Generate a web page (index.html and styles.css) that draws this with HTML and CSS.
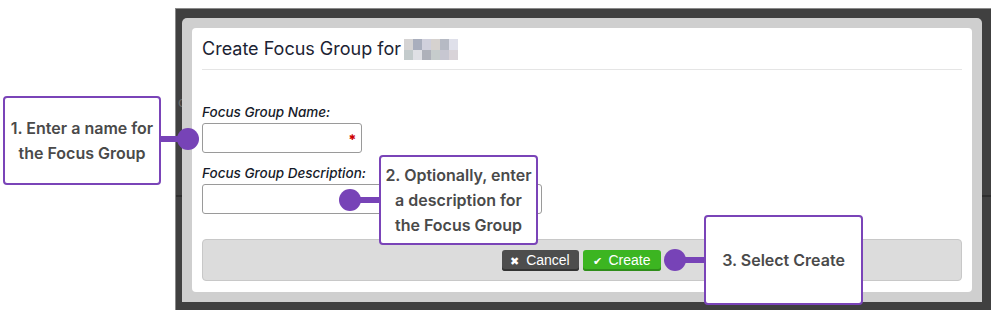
FILE: index.html
```html
<!DOCTYPE html>
<html lang="en">
<head>
    <meta charset="UTF-8">
    <title>Create Focus Group</title>
    <link rel="stylesheet" href="styles.css">
</head>
<body>
    <div class="stage">
        <div class="backdrop">
            <span class="bg-text">cu</span>
            <div class="frame">
                <div class="modal">
                    <div class="modal-header">
                        <h2>Create Focus Group for</h2>
                        <div class="blur">
                            <i style="background:#d5d3d3"></i><i style="background:#a9aebd"></i><i style="background:#d0d0dc"></i><i style="background:#d6d2cf"></i><i style="background:#b6bac4"></i><i style="background:#dfe0ea"></i>
                            <i style="background:#c3cbcc"></i><i style="background:#dfe0e5"></i><i style="background:#aeb1ba"></i><i style="background:#c6cccc"></i><i style="background:#c7c7d1"></i><i style="background:#d8d3d8"></i>
                        </div>
                    </div>
                    <form class="modal-body">
                        <label class="field-label">Focus Group Name:</label>
                        <div class="input name-input"><span class="req">&#10033;</span></div>
                        <label class="field-label">Focus Group Description:</label>
                        <div class="input desc-input"></div>
                        <div class="footer">
                            <button type="button" class="btn btn-cancel"><span class="ico">&#10006;</span> Cancel</button>
                            <button type="button" class="btn btn-create"><span class="ico">&#10004;</span> Create</button>
                        </div>
                    </form>
                </div>
            </div>
        </div>

        <!-- callouts -->
        <div class="callout c1">1. Enter a name for the Focus Group</div>
        <div class="connector k1"></div>
        <div class="callout c2">2. Optionally, enter a description for the Focus Group</div>
        <div class="connector k2"></div>
        <div class="callout c3">3. Select Create</div>
        <div class="connector k3"></div>
    </div>
</body>
</html>
```

FILE: styles.css
```css
body {
    margin: 0;
    background: #fff;
    font-family: Inter, "Noto Sans", sans-serif;
}
.stage {
    position: relative;
    width: 991px;
    height: 310px;
    overflow: hidden;
}
.backdrop {
    position: relative;
    margin: 8px 0 0 175px;
    height: 302px;
    box-sizing: border-box;
    padding: 9px 0 0 6px;
    background: #404040 linear-gradient(#404040 186px, #2e2e2e 186px, #2e2e2e 188px, #404040 188px);
    border-top: 1px solid #8a8a8a;
    border-left: 1px solid #8a8a8a;
}
.bg-text {
    position: absolute;
    left: 2px;
    top: 84px;
    font-size: 14px;
    color: #6a6a6a;
}
.frame {
    position: relative;
    width: 800px;
    height: 284px;
    box-sizing: border-box;
    padding: 10px;
    background: #cfcfcf;
    border-radius: 5px 5px 0 0;
}
.modal {
    background: #fff;
    border-radius: 4px;
    height: 264px;
    padding: 0 10px;
    box-sizing: border-box;
}
.modal-header {
    display: flex;
    align-items: center;
    gap: 3px;
    height: 41px;
    border-bottom: 1px solid #e5e5e5;
}
.modal-header h2 {
    margin: 0;
    font-size: 18px;
    font-weight: 400;
    color: #1c2333;
}
.blur {
    display: grid;
    grid-template-columns: repeat(6, 9px);
    grid-template-rows: 11px 10px;
    margin-top: 1px;
}
.modal-body {
    display: flex;
    flex-direction: column;
    align-items: flex-start;
    padding-top: 34px;
}
.field-label {
    font-size: 13.5px;
    font-style: italic;
    font-weight: 500;
    color: #151a28;
    line-height: 16px;
    margin-bottom: 3px;
}
.input {
    position: relative;
    height: 30px;
    box-sizing: border-box;
    border: 1px solid #9a9a9a;
    border-radius: 3px;
    margin-bottom: 12px;
}
.name-input {
    width: 160px;
}
.desc-input {
    width: 340px;
    margin-bottom: 25px;
}
.req {
    position: absolute;
    right: 5px;
    top: 8px;
    font-size: 8px;
    color: #c00;
}
.footer {
    width: 760px;
    height: 42px;
    box-sizing: border-box;
    background: #dcdcdc;
    border: 1px solid #c8c8c8;
    border-radius: 4px;
    display: flex;
    justify-content: center;
    align-items: center;
    gap: 4px;
    padding-right: 2px;
}
.btn {
    height: 21px;
    border: none;
    border-radius: 3px;
    color: #fff;
    font-family: "Liberation Sans", Arial, sans-serif;
    font-size: 14px;
    padding: 0;
    line-height: 21px;
    white-space: nowrap;
}
.btn .ico {
    font-size: 11px;
    margin-right: 3px;
}
.btn-cancel {
    width: 77px;
    background: #4d4d4d;
    box-shadow: inset 0 -2px 0 #333;
}
.btn-create {
    width: 78px;
    background: #3cb521;
    box-shadow: inset 0 -2px 0 #2f8d1a;
}
.callout {
    position: absolute;
    box-sizing: border-box;
    display: flex;
    align-items: center;
    justify-content: center;
    text-align: center;
    background: #fff;
    border: 2px solid #7a44b8;
    border-radius: 4px;
    color: #4a4a4a;
    font-size: 16px;
    font-weight: 600;
    line-height: 25px;
    padding: 0 4px;
}
.c1 { left: 3px; top: 96px; width: 158px; height: 89px; }
.c2 { left: 379px; top: 155px; width: 159px; height: 90px; }
.c3 { left: 704px; top: 215px; width: 159px; height: 90px; }
.connector {
    position: absolute;
    height: 6px;
    background: #7743b7;
}
.connector::after {
    content: "";
    position: absolute;
    left: -10px;
    top: -8px;
    width: 22px;
    height: 22px;
    border-radius: 50%;
    background: #7743b7;
}
.k1 { left: 160px; width: 28px; top: 136px; }
.k1::after { left: 17px; }
.k2 { left: 349px; width: 31px; top: 197px; }
.k3 { left: 674px; width: 31px; top: 257px; }
```
